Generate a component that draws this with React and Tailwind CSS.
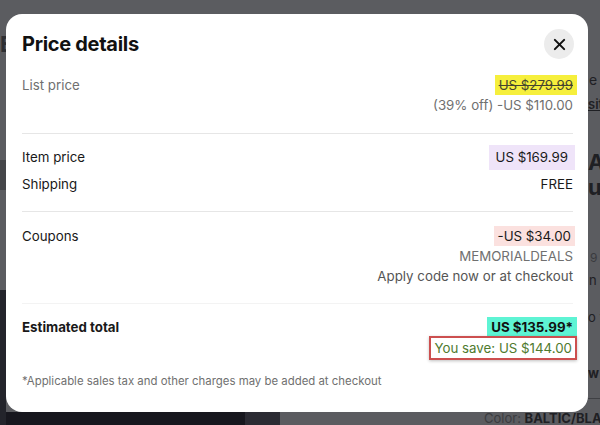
import React from "react";

function Row({ label, children, labelClass = "text-[#191919]" }) {
  return (
    <div className="flex justify-between items-center h-[20px]">
      <span className={labelClass}>{label}</span>
      {children}
    </div>
  );
}

function PageBehind() {
  return (
    <div className="absolute inset-0 flex">
      <div className="w-[6px] shrink-0 flex flex-col">
        <div className="h-[30px]" />
        <div className="text-[22px] leading-[28px] font-bold text-[#2e2f33] overflow-hidden">E</div>
        <div className="h-[102px]" />
        <div className="h-[30px] bg-[#45464a]" />
        <div className="h-[100px]" />
        <div className="flex-1 bg-[#23242b]" />
      </div>
      <div className="w-[582px] shrink-0 flex flex-col justify-end">
        <div className="h-[13px] flex">
          <div className="w-[239px] shrink-0 bg-[#17171e]" />
          <div className="w-[35px] shrink-0 bg-[#2b2b33]" />
          <div className="flex-1 min-w-0 pl-[204px] text-[13px] leading-[13px] whitespace-nowrap text-[#1f2024]">
            <span className="text-[#3a3b3f]">Color: </span>
            <span className="font-bold">BALTIC/BLACK</span>
          </div>
        </div>
      </div>
      <div className="w-[12px] shrink-0 flex flex-col text-[#1f2024] whitespace-nowrap">
        <div className="h-[71px]" />
        <div className="text-[14px] leading-[18px] pl-px">e</div>
        <div className="h-[6px]" />
        <div className="text-[13px] leading-[18px] font-semibold underline">sit</div>
        <div className="h-[36px]" />
        <div className="text-[22px] leading-[26px] font-bold">Az</div>
        <div className="text-[22px] leading-[24px] font-bold">ug</div>
        <div className="h-[50px]" />
        <div className="text-[12px] leading-[18px] pl-[2px] text-[#3a3b3f]">9</div>
        <div className="h-[4px]" />
        <div className="text-[13px] leading-[18px] pl-px">n c</div>
        <div className="h-[19px]" />
        <div className="text-[13px] leading-[18px]">o v</div>
        <div className="h-[38px]" />
        <div className="text-[13px] leading-[18px] font-bold">w</div>
        <div className="h-[16px]" />
        <div className="h-px bg-[#3f4044]" />
      </div>
    </div>
  );
}

export default function App() {
  return (
    <div
      className="relative w-[600px] h-[425px] overflow-hidden bg-[#5b5c60]"
      style={{ fontFamily: "Inter, 'Noto Sans', sans-serif" }}
    >
      <PageBehind />

      {/* modal */}
      <div className="absolute left-[6px] top-[14px] w-[582px] h-[398px] bg-white rounded-[16px] pl-[16px] pr-[15px] text-[13.3px] leading-[20px]">
        <div className="flex justify-between items-center pt-[15px] h-[45px]">
          <h2 className="text-[20px] font-bold text-[#111] tracking-[-0.3px]">Price details</h2>
          <button className="w-[30px] h-[30px] -mr-[1px] rounded-full bg-[#ececec] flex items-center justify-center">
            <svg width="13" height="13" viewBox="0 0 14 14">
              <path d="M2 2 L12 12 M12 2 L2 12" stroke="#111" strokeWidth="2.2" strokeLinecap="round" />
            </svg>
          </button>
        </div>

        <div className="mt-[16px] pb-[18px]">
          <Row label="List price" labelClass="text-[#707070]">
            <span className="bg-[#f6ef3c] px-[4px] -mr-[4px] line-through text-[#45452f]">US $279.99</span>
          </Row>
          <div className="text-right text-[#707070] h-[20px]">(39% off) -US $110.00</div>
        </div>

        <div className="border-t border-[#e6e6e6] pt-[13px] pb-[17px] flex flex-col gap-[7px]">
          <Row label="Item price">
            <span className="bg-[#efe4f9] px-[7px] -mr-[2px] h-[25px] flex items-center text-[#191919]">US $169.99</span>
          </Row>
          <Row label="Shipping">
            <span className="text-[#191919]">FREE</span>
          </Row>
        </div>

        <div className="border-t border-[#e6e6e6] pt-[14px] pb-[17px]">
          <Row label="Coupons">
            <span className="bg-[#fbe1df] px-[4px] -mr-[2px] text-[#191919]">-US $34.00</span>
          </Row>
          <div className="text-right text-[#707070] h-[20px]">MEMORIALDEALS</div>
          <div className="text-right text-[#555] h-[20px]">Apply code now or at checkout</div>
        </div>

        <div className="border-t border-[#f3f3f3] pt-[13px]">
          <Row label="Estimated total" labelClass="text-[#191919] font-bold">
            <span className="bg-[#5ef4d4] px-[4px] -mr-[4px] font-bold text-[#111]">US $135.99*</span>
          </Row>
          <div className="flex justify-end -mt-px">
            <span className="border-2 border-[#cc4f4f] h-[24px] px-[3px] -mr-[4px] flex items-center text-[#4f7a2e] shadow-[0_1px_3px_rgba(0,0,0,0.25)]">
              You save: US $144.00
            </span>
          </div>
        </div>

        <div className="mt-[13px] text-[11.4px] leading-[16px] text-[#707070]">
          *Applicable sales tax and other charges may be added at checkout
        </div>
      </div>
    </div>
  );
}
